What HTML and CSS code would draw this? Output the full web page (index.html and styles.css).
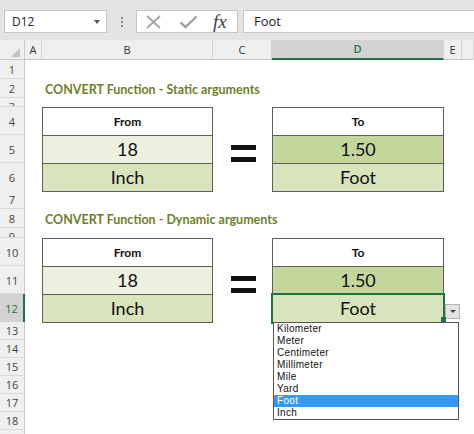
FILE: index.html
```html
<!DOCTYPE html>
<html lang="en">
<head>
    <meta charset="UTF-8">
    <title>CONVERT Function</title>
    <link rel="stylesheet" href="styles.css">
</head>
<body>
    <div class="toolbar">
        <div class="namebox"><span>D12</span><span class="nb-arrow"></span></div>
        <div class="grip"><i></i><i></i><i></i></div>
        <div class="fxbox">
            <svg class="ico-x" width="17" height="14" viewBox="0 0 17 14">
                <path d="M2 1 L15 13 M15 1 L2 13" stroke="#a3a3a3" stroke-width="1.8" fill="none"/>
            </svg>
            <svg class="ico-ok" width="19" height="14" viewBox="0 0 19 14">
                <path d="M1.5 7.5 L6.5 12 L17.5 1.5" stroke="#a3a3a3" stroke-width="2.4" fill="none"/>
            </svg>
            <span class="fx">fx</span>
        </div>
        <div class="formula">Foot</div>
    </div>

    <div class="sheet">
        <div class="row colheads">
            <div class="corner"></div>
            <div class="ch">A</div>
            <div class="ch">B</div>
            <div class="ch">C</div>
            <div class="ch sel">D</div>
            <div class="ch">E</div>
            <div class="ch"></div>
        </div>

        <div class="row h19"><div class="rh">1</div></div>
        <div class="row h19">
            <div class="rh">2</div>
            <div class="title colB">CONVERT Function - Static arguments</div>
        </div>
        <div class="row h9"><div class="rh">3</div></div>
        <div class="row h28">
            <div class="rh">4</div>
            <div class="tc head colB">From</div>
            <div class="tc head colD">To</div>
        </div>
        <div class="row h28">
            <div class="rh">5</div>
            <div class="tc light colB">18</div>
            <div class="eq colC"><i></i><i></i></div>
            <div class="tc dark colD">1.50</div>
        </div>
        <div class="row h28">
            <div class="rh">6</div>
            <div class="tc mid end colB">Inch</div>
            <div class="tc mid end colD">Foot</div>
        </div>
        <div class="row h18"><div class="rh">7</div></div>
        <div class="row h19">
            <div class="rh">8</div>
            <div class="title colB">CONVERT Function - Dynamic arguments</div>
        </div>
        <div class="row h10"><div class="rh">9</div></div>
        <div class="row h28">
            <div class="rh">10</div>
            <div class="tc head colB">From</div>
            <div class="tc head colD">To</div>
        </div>
        <div class="row h28">
            <div class="rh">11</div>
            <div class="tc light colB">18</div>
            <div class="eq colC"><i></i><i></i></div>
            <div class="tc dark colD">1.50</div>
        </div>
        <div class="row h28">
            <div class="rh sel">12</div>
            <div class="tc mid end colB">Inch</div>
            <div class="tc mid end colD active">
                Foot
                <span class="dd-btn"></span>
                <span class="handle"></span>
                <ul class="dd-list">
                    <li>Kilometer</li>
                    <li>Meter</li>
                    <li>Centimeter</li>
                    <li>Millimeter</li>
                    <li>Mile</li>
                    <li>Yard</li>
                    <li class="picked">Foot</li>
                    <li>Inch</li>
                </ul>
            </div>
        </div>
        <div class="row h18"><div class="rh">13</div></div>
        <div class="row h18"><div class="rh">14</div></div>
        <div class="row h18"><div class="rh">15</div></div>
        <div class="row h18"><div class="rh">16</div></div>
        <div class="row h18"><div class="rh">17</div></div>
        <div class="row h18"><div class="rh">18</div></div>
        <div class="row h18"><div class="rh">19</div></div>
    </div>
</body>
</html>
```

FILE: styles.css
```css
body {
    margin: 0;
    width: 474px;
    height: 434px;
    overflow: hidden;
    background: #fff;
    font-family: "Open Sans", sans-serif;
}

/* formula bar */

.toolbar {
    height: 40px;
    box-sizing: border-box;
    padding-top: 10px;
    background: #e4e4e4;
    display: flex;
    align-items: flex-start;
}

.namebox {
    margin-left: 4px;
    width: 103px;
    height: 23px;
    box-sizing: border-box;
    background: #fff;
    border: 1px solid #c6c6c6;
    display: flex;
    align-items: center;
    justify-content: space-between;
    padding: 0 6px 0 7px;
    font-size: 12px;
    color: #222;
}

.nb-arrow {
    width: 0;
    height: 0;
    border-left: 3px solid transparent;
    border-right: 3px solid transparent;
    border-top: 4px solid #555;
}

.grip {
    width: 29px;
    height: 23px;
    display: flex;
    flex-direction: column;
    align-items: center;
    justify-content: center;
    gap: 2px;
}

.grip i {
    width: 2px;
    height: 2px;
    background: #8a8a8a;
}

.fxbox {
    width: 102px;
    height: 23px;
    box-sizing: border-box;
    background: #fff;
    border: 1px solid #c6c6c6;
    display: flex;
    align-items: center;
    padding-left: 8px;
}

.ico-ok {
    margin-left: 17px;
}

.fx {
    margin-left: 15px;
    font-family: "Liberation Serif", serif;
    font-style: italic;
    font-size: 19px;
    color: #404040;
    line-height: 21px;
}

.formula {
    margin-left: 5px;
    flex: 1;
    height: 23px;
    box-sizing: border-box;
    background: #fff;
    border: 1px solid #c6c6c6;
    border-right: none;
    padding-left: 10px;
    font-size: 13px;
    line-height: 21px;
    color: #222;
}

/* grid */

.row {
    display: grid;
    grid-template-columns: 25px 17px 171px 59px 172px 18px 1fr;
    box-sizing: border-box;
}

.h9 { height: 9px; }
.h10 { height: 10px; }
.h18 { height: 18px; }
.h19 { height: 19px; }
.h28 { height: 28px; }

.colB { grid-column: 3; }
.colC { grid-column: 4; }
.colD { grid-column: 5; }

.colheads {
    height: 20px;
    background: #efefef;
    border-bottom: 1px solid #c8c8c8;
}

.corner {
    position: relative;
    border-right: 1px solid #c8c8c8;
}

.corner::after {
    content: "";
    position: absolute;
    right: 4px;
    bottom: 3px;
    width: 0;
    height: 0;
    border-left: 9px solid transparent;
    border-bottom: 9px solid #c2c2c2;
}

.ch {
    border-right: 1px solid #d4d4d4;
    text-align: center;
    font-size: 11px;
    line-height: 19px;
    color: #333;
}

.ch.sel {
    background: #d2d2d2;
    color: #217346;
    border-bottom: 2px solid #217346;
    line-height: 18px;
    font-weight: 600;
}

.rh {
    grid-column: 1;
    background: #efefef;
    border-right: 1px solid #c8c8c8;
    border-bottom: 1px solid #dadada;
    box-sizing: border-box;
    text-align: center;
    font-size: 11px;
    line-height: 18px;
    color: #444;
    overflow: hidden;
}

.h19 .rh { line-height: 19px; }
.h28 .rh { line-height: 30px; }

.rh.sel {
    background: #d2d2d2;
    color: #217346;
    border-right: 2px solid #217346;
}

.title {
    padding: 3px 0 0 3px;
    font-family: Lato, sans-serif;
    font-weight: bold;
    font-size: 12.5px;
    color: #6e7f2c;
    white-space: nowrap;
}

/* tables */

.tc {
    border: 1px solid #5f5f5f;
    border-bottom: none;
    box-sizing: border-box;
    text-align: center;
    font-family: Lato, sans-serif;
    font-size: 18px;
    line-height: 27px;
    color: #111;
}

.tc.end {
    border-bottom: 1px solid #5f5f5f;
}

.tc.head {
    background: #fff;
    font-weight: bold;
    font-size: 12px;
}

.light { background: #ebf1de; }
.mid { background: #d8e4bc; }
.dark { background: #c4d79b; }

.eq {
    display: flex;
    flex-direction: column;
    align-items: center;
    padding: 10px 0 0 2px;
    gap: 7px;
}

.eq i {
    width: 25px;
    height: 5px;
    background: #111;
}

/* active cell with validation list */

.active {
    position: relative;
    line-height: 26px;
}

.active::before {
    content: "";
    position: absolute;
    inset: -2px;
    border: 2px solid #217346;
}

.dd-btn {
    position: absolute;
    left: 172px;
    top: 9px;
    width: 15px;
    height: 15px;
    box-sizing: border-box;
    background: #e4e4e4;
    border: 1px solid #b4b4b4;
}

.dd-btn::after {
    content: "";
    position: absolute;
    left: 4px;
    top: 5px;
    border-left: 3px solid transparent;
    border-right: 3px solid transparent;
    border-top: 3px solid #444;
}

.handle {
    position: absolute;
    left: 168px;
    top: 22px;
    width: 5px;
    height: 5px;
    background: #217346;
    z-index: 2;
}

.dd-list {
    position: absolute;
    left: 0;
    top: 27px;
    width: 186px;
    margin: 0;
    padding: 0;
    list-style: none;
    background: #fff;
    border: 1px solid #555;
    box-sizing: border-box;
    text-align: left;
    z-index: 3;
}

.dd-list li {
    height: 12px;
    padding-left: 3px;
    font-family: "Liberation Sans", sans-serif;
    font-size: 10px;
    letter-spacing: 0.3px;
    line-height: 12px;
    color: #111;
}

.dd-list li.picked {
    background: #3399ff;
    color: #fff;
}
```
